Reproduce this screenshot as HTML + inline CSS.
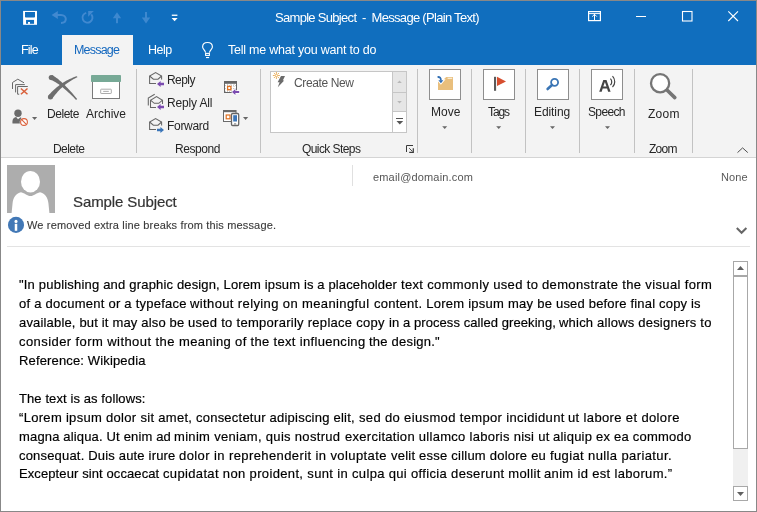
<!DOCTYPE html>
<html><head><meta charset="utf-8"><style>
*{margin:0;padding:0;box-sizing:border-box}
html,body{width:757px;height:512px;overflow:hidden;background:#fff}
body{position:relative;font-family:"Liberation Sans",sans-serif}
.t{position:absolute;white-space:pre;transform-origin:0 0;will-change:transform}
.a{position:absolute}
svg{position:absolute;overflow:visible}
</style></head><body>
<svg width="757" height="512" viewBox="0 0 757 512" style="left:0;top:0">
<g shape-rendering="crispEdges">
<!-- frame -->
<rect x="0" y="0" width="757" height="512" fill="#888888"/>
<rect x="1" y="1" width="755" height="510" fill="#ffffff"/>
<!-- title/tab bar -->
<rect x="1" y="1" width="755" height="64" fill="#106ebe"/>
<rect x="62" y="35" width="71" height="30" fill="#f3f3f3"/>
<!-- ribbon -->
<rect x="1" y="65" width="755" height="92" fill="#f3f3f3"/>
<rect x="1" y="157" width="755" height="1" fill="#d4d4d4"/>
<!-- separators -->
<rect x="136" y="69" width="1" height="84" fill="#c2c2c2"/>
<rect x="260" y="69" width="1" height="84" fill="#c2c2c2"/>
<rect x="417" y="69" width="1" height="84" fill="#c2c2c2"/>
<rect x="471" y="69" width="1" height="84" fill="#c2c2c2"/>
<rect x="525" y="69" width="1" height="84" fill="#c2c2c2"/>
<rect x="579" y="69" width="1" height="84" fill="#c2c2c2"/>
<rect x="634" y="69" width="1" height="84" fill="#c2c2c2"/>
<rect x="692" y="69" width="1" height="84" fill="#c2c2c2"/>
<!-- big button boxes -->
<rect x="429.5" y="69.5" width="31" height="30" fill="#ffffff" stroke="#8e8e8e" stroke-width="1"/>
<rect x="483.5" y="69.5" width="31" height="30" fill="#ffffff" stroke="#8e8e8e" stroke-width="1"/>
<rect x="537.5" y="69.5" width="31" height="30" fill="#ffffff" stroke="#8e8e8e" stroke-width="1"/>
<rect x="591.5" y="69.5" width="31" height="30" fill="#ffffff" stroke="#8e8e8e" stroke-width="1"/>
<!-- quick steps box -->
<rect x="270.5" y="71.5" width="136" height="61" fill="#ffffff" stroke="#c6c6c6" stroke-width="1"/>
<rect x="393" y="72" width="13" height="20" fill="#e6e6e6"/>
<rect x="393" y="93" width="13" height="18" fill="#e6e6e6"/>
<rect x="392" y="72" width="1" height="60" fill="#c6c6c6"/>
<rect x="392" y="92" width="14" height="1" fill="#c6c6c6"/>
<rect x="392" y="111" width="14" height="1" fill="#c6c6c6"/>
<rect x="396" y="118" width="7" height="1.4" fill="#555555"/>
<!-- header -->
<rect x="352" y="165" width="1" height="21" fill="#e0e0e0"/>
<rect x="7" y="246" width="743" height="1" fill="#e3e3e3"/>
<rect x="7" y="165" width="48" height="48" fill="#adadad"/>
<!-- scrollbar -->
<rect x="733.5" y="261.5" width="14" height="14" fill="#ffffff" stroke="#a8a8a8"/>
<rect x="733.5" y="276.5" width="14" height="172" fill="#ffffff" stroke="#a8a8a8"/>
<rect x="733" y="449" width="15" height="37" fill="#f0f0f0"/>
<rect x="733.5" y="486.5" width="14" height="14" fill="#ffffff" stroke="#a8a8a8"/>
</g>
<!-- avatar silhouette -->
<ellipse cx="30.5" cy="181.7" rx="9.5" ry="10.8" fill="#ffffff"/>
<path d="M11.6,213 L12.6,203 C13.2,197 16.5,193 21,192.2 C25,193 27,196 30.5,196 C34,196 36,193 40,192.2 C44.5,193 47.8,197 48.4,203 L49.4,213 Z" fill="#ffffff"/>
<!-- info icon -->
<circle cx="16" cy="224.9" r="8.05" fill="#4278b6"/>
<rect x="14.75" y="223.8" width="2.5" height="7" fill="#fff"/>
<circle cx="16" cy="221.4" r="1.55" fill="#fff"/>
<!-- chevron down -->
<path d="M736.8,228 L741.6,232.8 L746.4,228" fill="none" stroke="#666" stroke-width="2"/>
<!-- collapse ribbon chevron -->
<path d="M737.5,152.6 L742.6,147.9 L747.8,152.6" fill="none" stroke="#505050" stroke-width="1"/>
<!-- scroll arrows -->
<path d="M737,270 L740.5,266 L744,270 Z" fill="#606060"/>
<path d="M737,492 L740.5,496 L744,492 Z" fill="#606060"/>
<!-- title bar icons -->
<rect x="23.1" y="10.9" width="13.9" height="13.9" fill="#ffffff"/>
<path d="M25,12.1 H35 V16.9 L34.3,17.6 H25.7 L25,16.9 Z" fill="#106ebe"/>
<rect x="26.05" y="19.9" width="8" height="3.9" fill="#106ebe"/>
<rect x="28" y="22" width="2" height="1.9" fill="#ffffff"/>
<!-- undo -->
<path d="M51.6,15 L57.8,10.9 V19.1 Z" fill="#4189d0"/>
<path d="M57,15 H61 C64,15 65.8,17 65.8,19.1 C65.8,21.4 64,23 61,23" fill="none" stroke="#4189d0" stroke-width="2"/>
<!-- redo circular -->
<path d="M86.2,12.8 A5,5 0 1 0 91.3,14.4" fill="none" stroke="#4189d0" stroke-width="1.9"/>
<path d="M88.2,10.9 H93.8 L88.2,16.8 Z" fill="#4189d0"/>
<!-- up/down arrows -->
<path d="M112.8,18.2 L117,12.2 L121.2,18.2 Z" fill="#3d88cf"/>
<rect x="116" y="16" width="2" height="7.2" fill="#3d88cf"/>
<path d="M141.8,17.6 L146,23.4 L150.2,17.6 Z" fill="#3d88cf"/>
<rect x="145" y="12" width="2" height="7" fill="#3d88cf"/>
<!-- customize -->
<rect x="171.8" y="14.6" width="5.6" height="1.3" fill="#fff"/>
<path d="M171.6,18 H177.6 L174.6,21.3 Z" fill="#fff"/>
<!-- window controls -->
<rect x="588.6" y="11.6" width="11.8" height="9" fill="none" stroke="#fff" stroke-width="1.2"/>
<path d="M588.6,13.6 H600.4" stroke="#fff" stroke-width="1"/>
<path d="M594.5,20.5 V14 M592.2,16.6 L594.5,14.3 L596.8,16.6" fill="none" stroke="#fff" stroke-width="1"/>
<rect x="636" y="16" width="10" height="1" fill="#fff"/>
<rect x="682.5" y="11.5" width="9.5" height="9.5" fill="none" stroke="#fff" stroke-width="1.1"/>
<path d="M728.3,11.3 L738,21 M738,11.3 L728.3,21" stroke="#fff" stroke-width="1.1"/>
<!-- lightbulb -->
<path d="M205.6,52.6 C205,50.2 202.6,48.8 202.6,47 C202.6,44.1 204.8,42.5 207.5,42.5 C210.2,42.5 212.4,44.1 212.4,47 C212.4,48.8 210,50.2 209.4,52.6" fill="none" stroke="#fff" stroke-width="1.15"/>
<rect x="205.6" y="53.4" width="3.8" height="2" fill="none" stroke="#fff" stroke-width="1.1"/>
<rect x="206" y="57" width="3.1" height="1.1" fill="#fff"/>
<!-- ignore icon -->
<g fill="none" stroke="#686868" stroke-width="1">
<path d="M12.5,89 V82.5 L17.8,79.2 L24,82.8"/>
<path d="M15.6,92.4 V84.6 H24.8"/>
<path d="M19.2,94.2 H17.6 V86.5 H27.8"/>
</g>
<path d="M20.9,88.5 L27.5,94.3 M27.5,88.5 L20.9,94.3" stroke="#d9603b" stroke-width="1.5"/>
<!-- junk icon -->
<circle cx="18" cy="113.3" r="3.7" fill="#6b6b6b"/>
<path d="M12.5,123.6 C12.2,119.5 13.2,117.5 16.2,117 L18,119.3 L20.5,117.2 L21.5,118 L19.8,123.6 Z" fill="#6b6b6b"/>
<circle cx="24" cy="122" r="3.6" fill="#ffffff" stroke="#ffffff" stroke-width="1.4"/><circle cx="24" cy="122" r="3.4" fill="#ffffff" stroke="#d9603b" stroke-width="1.1"/>
<path d="M21.7,119.7 L26.3,124.3" stroke="#d9603b" stroke-width="1.1"/>
<path d="M32,117 H37.2 L34.6,120.1 Z" fill="#666"/>
<!-- delete X -->
<path d="M50.19,79.69 L50.92,79.95 L51.69,80.26 L52.50,80.62 L53.33,81.03 L54.21,81.50 L55.11,82.01 L56.04,82.58 L57.00,83.20 L57.99,83.87 L59.01,84.59 L60.06,85.36 L61.14,86.18 L62.24,87.05 L63.36,87.97 L64.52,88.94 L65.70,89.96 L66.90,91.03 L68.13,92.15 L69.39,93.32 L70.67,94.54 L71.98,95.81 L73.31,97.12 L74.66,98.49 L76.04,99.90 L77.16,98.90 L75.88,97.38 L74.62,95.90 L73.39,94.48 L72.17,93.10 L70.98,91.76 L69.82,90.47 L68.67,89.23 L67.55,88.04 L66.44,86.89 L65.36,85.79 L64.30,84.73 L63.26,83.72 L62.25,82.76 L61.25,81.84 L60.27,80.96 L59.31,80.13 L58.37,79.35 L57.44,78.61 L56.53,77.92 L55.64,77.27 L54.77,76.66 L53.90,76.10 L53.05,75.58 L52.21,75.11Z" fill="#6e6e6e"/>
<path d="M52.37,98.54 L53.21,97.36 L54.07,96.21 L54.94,95.08 L55.83,93.97 L56.74,92.90 L57.66,91.84 L58.61,90.82 L59.57,89.81 L60.55,88.84 L61.54,87.89 L62.55,86.96 L63.59,86.06 L64.64,85.19 L65.70,84.34 L66.79,83.51 L67.90,82.71 L69.02,81.94 L70.16,81.19 L71.32,80.47 L72.50,79.78 L73.70,79.11 L74.92,78.47 L76.16,77.85 L77.42,77.26 L76.98,76.14 L75.64,76.60 L74.31,77.08 L72.99,77.59 L71.69,78.14 L70.39,78.71 L69.11,79.32 L67.85,79.95 L66.59,80.62 L65.35,81.32 L64.13,82.04 L62.91,82.80 L61.71,83.59 L60.53,84.41 L59.36,85.26 L58.20,86.14 L57.05,87.05 L55.93,88.00 L54.81,88.97 L53.71,89.97 L52.62,91.01 L51.55,92.08 L50.50,93.17 L49.46,94.30 L48.43,95.46Z" fill="#6e6e6e"/>
<circle cx="51.2" cy="77.4" r="2.5" fill="#6e6e6e"/>
<circle cx="50.4" cy="97" r="2.5" fill="#6e6e6e"/>
<!-- archive -->
<rect x="92.5" y="80" width="27" height="18.5" fill="#ffffff" stroke="#7a7a7a" stroke-width="1"/>
<rect x="91" y="75" width="30" height="7" rx="0.8" fill="#77a996"/>
<rect x="100.7" y="89.2" width="10.6" height="4.3" rx="0.5" fill="none" stroke="#a3a3a3" stroke-width="0.9"/>
<path d="M103.2,91.4 H108.8" stroke="#a3a3a3" stroke-width="0.9"/>
<!-- reply icons -->
<g fill="none" stroke="#666666" stroke-width="1.05">
<path d="M156,83.4 H149.6 V76 L155.6,72.6 L161.6,76 V79.6"/>
<path d="M149.6,76 L153.4,79.2 H158 L161.6,76"/>
<path d="M156,107.4 H150.5 V100.2 L156.5,96.6 L162.5,100.2 V104"/>
<path d="M150.5,100.2 L154.3,103.3 H158.8 L162.5,100.2"/>
<path d="M148.3,105.6 V98 L154.7,94.2"/>
<path d="M156,129.4 H149.6 V122 L155.6,118.6 L161.6,122 V125.6"/>
<path d="M149.6,122 L153.4,125.2 H158 L161.6,122"/>
</g>
<path d="M157,84 L160.6,81 V82.85 H164 V85.15 H160.6 V87 Z" fill="#7b4bb0"/>
<path d="M157,107 L160.6,104 V105.85 H164 V108.15 H160.6 V110 Z" fill="#7b4bb0"/>
<path d="M164,130 L160.4,127 V128.85 H157 V131.15 H160.4 V133 Z" fill="#3a75b8"/>
<!-- meeting reply icon -->
<rect x="224.5" y="81.5" width="12" height="11" fill="#fff" stroke="#666" stroke-width="1"/>
<rect x="224" y="81" width="13" height="2.8" fill="#666"/>
<g stroke="#b4b4b4" stroke-width="0.8" stroke-dasharray="1,1">
<path d="M225,85.6 H236 M225,88.6 H236 M225,91.4 H236 M227.6,84 V92 M231,84 V92 M234,84 V92"/>
</g>
<rect x="227.6" y="86.4" width="3.3" height="3.3" fill="#fff" stroke="#e0701e" stroke-width="1.3"/>
<path d="M231.2,92 L235.6,87.6 V90.2 H240 V93.8 H235.6 V96.4 Z" fill="#fff"/>
<path d="M232,92 L235.4,89 V90.9 H239.2 V93.1 H235.4 V95 Z" fill="#7b4bb0"/>
<!-- IM icon -->
<rect x="223.5" y="110.5" width="12.5" height="11" fill="#fff" stroke="#6a6a6a" stroke-width="1"/>
<rect x="223.5" y="110" width="12.6" height="2.2" fill="#6a6a6a"/>
<rect x="226.2" y="115" width="3.8" height="3.8" fill="none" stroke="#e07020" stroke-width="1.2"/>
<rect x="231.5" y="113.5" width="7.2" height="12" rx="1.2" fill="#fff" stroke="#666" stroke-width="1.3"/>
<rect x="233.2" y="115.2" width="3.8" height="6.3" fill="#3c76b8"/>
<path d="M234,123.9 H236.2" stroke="#666" stroke-width="0.9"/>
<path d="M243,117 H248.2 L245.6,120 Z" fill="#666"/>
<!-- quick steps icons -->
<g stroke="#e8a64a" stroke-width="0.9" fill="none">
<circle cx="276.4" cy="75.5" r="1.2"/>
<path d="M276.4,72 V73.8 M276.4,77.2 V79 M272.9,75.5 H274.7 M278.1,75.5 H279.9 M273.9,73 L275,74.1 M277.8,76.9 L278.9,78 M278.9,73 L277.8,74.1 M275,76.9 L273.9,78"/>
</g>
<path d="M281,76.1 H285 L282.8,80.4 H284.2 L277.8,87.2 L279.6,82.2 H277.6 Z" fill="#6b6b6b"/>
<path d="M397.2,83 L399.5,80.5 L401.8,83 Z" fill="#b8b8b8"/>
<path d="M397.2,101 L399.5,103.5 L401.8,101 Z" fill="#b8b8b8"/>
<path d="M396.5,121 H403.2 L399.8,124.6 Z" fill="#555"/>
<!-- dialog launcher -->
<path d="M406.5,152 V145.5 H413" fill="none" stroke="#3a3a3a" stroke-width="1"/><path d="M409.2,148.2 L412.4,151.4" fill="none" stroke="#3a3a3a" stroke-width="0.9"/><path d="M409.2,152.3 H413.3 V148.2" fill="none" stroke="#3a3a3a" stroke-width="1.2"/>
<!-- move folder -->
<path d="M438,89.9 V80.5 H442.4 L446.2,77 H453 V89.9 Z" fill="#e9bf7d"/>
<rect x="447.6" y="77.7" width="4.6" height="1.3" fill="#f8ead0"/>
<path d="M437.6,77 C439.8,76.8 440.9,77.8 440.9,80.2" fill="none" stroke="#ffffff" stroke-width="3.4"/>
<path d="M437.9,80 L440.9,83.6 L443.9,80 Z" fill="#ffffff" stroke="#ffffff" stroke-width="1.6"/>
<path d="M437.6,77 C439.8,76.8 440.9,77.8 440.9,80.4" fill="none" stroke="#2f6db3" stroke-width="1.8"/>
<path d="M438.4,80.2 L440.9,83.2 L443.4,80.2 Z" fill="#2f6db3"/>
<!-- arrows under buttons -->
<path d="M442.2,126.2 H447.2 L444.7,129 Z" fill="#666"/>
<path d="M496.2,126.2 H501.2 L498.7,129 Z" fill="#666"/>
<path d="M550,126.2 H555 L552.5,129 Z" fill="#666"/>
<path d="M605,126.2 H610 L607.5,129 Z" fill="#666"/>
<!-- tags flag -->
<rect x="494" y="76.8" width="2.1" height="14" fill="#5a5a5a"/>
<path d="M497,76.8 L506,81.4 L497,86.1 Z" fill="#d64e2f"/>
<!-- editing magnifier -->
<circle cx="554.6" cy="82.3" r="3.5" fill="none" stroke="#3a75b5" stroke-width="1.8"/>
<path d="M552,85 L547.6,89" stroke="#3a75b5" stroke-width="2.6" stroke-linecap="round"/>
<!-- speech A -->
<path d="M599.2,91.8 L603.3,80.1 H606.5 L610.6,91.8 H608.1 L607.1,88.6 H602.7 L601.7,91.8 Z M603.3,86.5 H606.5 L604.9,81.9 Z" fill="#444" fill-rule="evenodd"/>
<path d="M610.4,78.6 C612.2,80.4 612.2,83.4 610.4,85.2" fill="none" stroke="#444" stroke-width="1.2"/>
<path d="M612.5,76.2 C615.5,79.3 615.5,84.1 612.5,87" fill="none" stroke="#444" stroke-width="1.2"/>
<!-- zoom magnifier -->
<circle cx="660.1" cy="83.2" r="9.1" fill="#ffffff" stroke="#757575" stroke-width="2.3"/>
<path d="M667.2,90.3 L674.8,97.6" stroke="#757575" stroke-width="3.6" stroke-linecap="round"/>
</svg>

<div class='t' style="left:275.00px;top:11.00px;font-size:13px;line-height:13px;color:#ffffff;letter-spacing:-0.6970px">Sample Subject  -  Message (Plain Text)</div><div class='t' style="left:21.30px;top:44.00px;font-size:12.5px;line-height:12.5px;color:#ffffff;letter-spacing:-0.7854px">File</div><div class='t' style="left:74.20px;top:44.00px;font-size:12.5px;line-height:12.5px;color:#1367be;letter-spacing:-0.7891px">Message</div><div class='t' style="left:147.50px;top:44.00px;font-size:12.5px;line-height:12.5px;color:#ffffff;letter-spacing:-0.5396px">Help</div><div class='t' style="left:228.10px;top:44.00px;font-size:12.5px;line-height:12.5px;color:#ffffff;letter-spacing:-0.2250px">Tell me what you want to do</div><div class='t' style="left:46.60px;top:108.00px;font-size:12px;line-height:12px;color:#262626;letter-spacing:-0.4575px">Delete</div><div class='t' style="left:86.00px;top:108.00px;font-size:12px;line-height:12px;color:#262626;letter-spacing:-0.0026px">Archive</div><div class='t' style="left:52.70px;top:143.00px;font-size:12px;line-height:12px;color:#262626;letter-spacing:-0.5575px">Delete</div><div class='t' style="left:167.40px;top:74.00px;font-size:12px;line-height:12px;color:#262626;letter-spacing:-0.5469px">Reply</div><div class='t' style="left:167.40px;top:97.00px;font-size:12px;line-height:12px;color:#262626;letter-spacing:-0.1609px">Reply All</div><div class='t' style="left:167.40px;top:120.00px;font-size:12px;line-height:12px;color:#262626;letter-spacing:-0.3026px">Forward</div><div class='t' style="left:175.40px;top:143.00px;font-size:12px;line-height:12px;color:#262626;letter-spacing:-0.4411px">Respond</div><div class='t' style="left:293.60px;top:77.00px;font-size:12px;line-height:12px;color:#555555;letter-spacing:-0.3733px">Create New</div><div class='t' style="left:301.50px;top:143.00px;font-size:12px;line-height:12px;color:#262626;letter-spacing:-0.5803px">Quick Steps</div><div class='t' style="left:430.60px;top:106.00px;font-size:12px;line-height:12px;color:#262626;letter-spacing:0.0187px">Move</div><div class='t' style="left:487.50px;top:106.00px;font-size:12px;line-height:12px;color:#262626;letter-spacing:-1.0865px">Tags</div><div class='t' style="left:534.40px;top:106.00px;font-size:12px;line-height:12px;color:#262626;letter-spacing:-0.0839px">Editing</div><div class='t' style="left:588.20px;top:106.00px;font-size:12px;line-height:12px;color:#262626;letter-spacing:-0.6406px">Speech</div><div class='t' style="left:647.90px;top:108.00px;font-size:12px;line-height:12px;color:#262626;letter-spacing:0.2708px">Zoom</div><div class='t' style="left:649.00px;top:143.00px;font-size:12px;line-height:12px;color:#262626;letter-spacing:-0.7292px">Zoom</div><div class='t' style="left:73.30px;top:194.00px;font-size:15px;line-height:15px;color:#333333;letter-spacing:-0.1048px;-webkit-text-stroke:0.2px #333">Sample Subject</div><div class='t' style="left:27.00px;top:220.00px;font-size:11px;line-height:11px;color:#3a3a3a;letter-spacing:0.1542px;-webkit-text-stroke:0.12px #3a3a3a">We removed extra line breaks from this message.</div><div class='t' style="left:372.70px;top:172.00px;font-size:11px;line-height:11px;color:#555555;letter-spacing:0.1683px">email@domain.com</div><div class='t' style="left:720.70px;top:172.00px;font-size:11px;line-height:11px;color:#5a5a5a;letter-spacing:0.1010px">None</div><div class='t' style="left:18.60px;top:278.00px;font-size:13px;line-height:13px;color:#000000;letter-spacing:0.1970px;-webkit-text-stroke:0.18px #000">&quot;In publishing and graphic </div><div class='t' style="left:176.70px;top:278.00px;font-size:13px;line-height:13px;color:#000000;letter-spacing:0.1310px;-webkit-text-stroke:0.18px #000">design, Lorem ipsum is a placeholder </div><div class='t' style="left:400.50px;top:278.00px;font-size:13px;line-height:13px;color:#000000;letter-spacing:0.3422px;-webkit-text-stroke:0.18px #000">text commonly used to </div><div class='t' style="left:541.70px;top:278.00px;font-size:13px;line-height:13px;color:#000000;letter-spacing:0.3613px;-webkit-text-stroke:0.18px #000">demonstrate the visual form</div><div class='t' style="left:18.60px;top:297.00px;font-size:13px;line-height:13px;color:#000000;letter-spacing:0.2471px;-webkit-text-stroke:0.18px #000">of a document or a typeface </div><div class='t' style="left:190.30px;top:297.00px;font-size:13px;line-height:13px;color:#000000;letter-spacing:0.3800px;-webkit-text-stroke:0.18px #000">without relying on meaningful </div><div class='t' style="left:373.70px;top:297.00px;font-size:13px;line-height:13px;color:#000000;letter-spacing:0.2550px;-webkit-text-stroke:0.18px #000">content. Lorem ipsum may be </div><div class='t' style="left:555.70px;top:297.00px;font-size:13px;line-height:13px;color:#000000;letter-spacing:0.1832px;-webkit-text-stroke:0.18px #000">used before final copy is</div><div class='t' style="left:18.60px;top:316.00px;font-size:13px;line-height:13px;color:#000000;letter-spacing:0.1718px;-webkit-text-stroke:0.18px #000">available, but it may also be </div><div class='t' style="left:187.80px;top:316.00px;font-size:13px;line-height:13px;color:#000000;letter-spacing:0.2793px;-webkit-text-stroke:0.18px #000">used to temporarily replace copy </div><div class='t' style="left:388.50px;top:316.00px;font-size:13px;line-height:13px;color:#000000;letter-spacing:0.0742px;-webkit-text-stroke:0.18px #000">in a process called greeking, </div><div class='t' style="left:559.10px;top:316.00px;font-size:13px;line-height:13px;color:#000000;letter-spacing:0.2081px;-webkit-text-stroke:0.18px #000">which allows designers to</div><div class='t' style="left:18.60px;top:335.00px;font-size:13px;line-height:13px;color:#000000;letter-spacing:0.4246px;-webkit-text-stroke:0.18px #000">consider form without the </div><div class='t' style="left:178.50px;top:335.00px;font-size:13px;line-height:13px;color:#000000;letter-spacing:0.3265px;-webkit-text-stroke:0.18px #000">meaning of the text influencing </div><div class='t' style="left:368.90px;top:335.00px;font-size:13px;line-height:13px;color:#000000;letter-spacing:0.2256px;-webkit-text-stroke:0.18px #000">the design.&quot;</div><div class='t' style="left:18.60px;top:354.00px;font-size:13px;line-height:13px;color:#000000;letter-spacing:0.1493px;-webkit-text-stroke:0.18px #000">Reference: Wikipedia</div><div class='t' style="left:18.60px;top:392.00px;font-size:13px;line-height:13px;color:#000000;letter-spacing:0.0963px;-webkit-text-stroke:0.18px #000">The text is as follows:</div><div class='t' style="left:18.60px;top:411.00px;font-size:13px;line-height:13px;color:#000000;letter-spacing:0.3054px;-webkit-text-stroke:0.18px #000">“Lorem ipsum dolor sit amet, </div><div class='t' style="left:195.80px;top:411.00px;font-size:13px;line-height:13px;color:#000000;letter-spacing:0.2278px;-webkit-text-stroke:0.18px #000">consectetur adipiscing elit, </div><div class='t' style="left:358.50px;top:411.00px;font-size:13px;line-height:13px;color:#000000;letter-spacing:0.3541px;-webkit-text-stroke:0.18px #000">sed do eiusmod tempor incididunt </div><div class='t' style="left:568.20px;top:411.00px;font-size:13px;line-height:13px;color:#000000;letter-spacing:0.3668px;-webkit-text-stroke:0.18px #000">ut labore et dolore</div><div class='t' style="left:18.60px;top:430.00px;font-size:13px;line-height:13px;color:#000000;letter-spacing:0.1614px;-webkit-text-stroke:0.18px #000">magna aliqua. Ut enim ad </div><div class='t' style="left:174.40px;top:430.00px;font-size:13px;line-height:13px;color:#000000;letter-spacing:0.3132px;-webkit-text-stroke:0.18px #000">minim veniam, quis nostrud </div><div class='t' style="left:344.70px;top:430.00px;font-size:13px;line-height:13px;color:#000000;letter-spacing:0.2842px;-webkit-text-stroke:0.18px #000">exercitation ullamco laboris nisi ut </div><div class='t' style="left:553.20px;top:430.00px;font-size:13px;line-height:13px;color:#000000;letter-spacing:0.2248px;-webkit-text-stroke:0.18px #000">aliquip ex ea commodo</div><div class='t' style="left:18.60px;top:449.00px;font-size:13px;line-height:13px;color:#000000;letter-spacing:0.1824px;-webkit-text-stroke:0.18px #000">consequat. Duis aute irure </div><div class='t' style="left:178.90px;top:449.00px;font-size:13px;line-height:13px;color:#000000;letter-spacing:0.4056px;-webkit-text-stroke:0.18px #000">dolor in reprehenderit in voluptate </div><div class='t' style="left:390.80px;top:449.00px;font-size:13px;line-height:13px;color:#000000;letter-spacing:0.2297px;-webkit-text-stroke:0.18px #000">velit esse cillum dolore eu </div><div class='t' style="left:549.70px;top:449.00px;font-size:13px;line-height:13px;color:#000000;letter-spacing:0.3824px;-webkit-text-stroke:0.18px #000">fugiat nulla pariatur.</div><div class='t' style="left:18.60px;top:467.00px;font-size:13px;line-height:13px;color:#000000;letter-spacing:0.0983px;-webkit-text-stroke:0.18px #000">Excepteur sint occaecat </div><div class='t' style="left:162.60px;top:467.00px;font-size:13px;line-height:13px;color:#000000;letter-spacing:0.3501px;-webkit-text-stroke:0.18px #000">cupidatat non proident, sunt in </div><div class='t' style="left:351.60px;top:467.00px;font-size:13px;line-height:13px;color:#000000;letter-spacing:0.3400px;-webkit-text-stroke:0.18px #000">culpa qui officia deserunt mollit </div><div class='t' style="left:544.30px;top:467.00px;font-size:13px;line-height:13px;color:#000000;letter-spacing:0.3355px;-webkit-text-stroke:0.18px #000">anim id est laborum.”</div>
</body></html>
